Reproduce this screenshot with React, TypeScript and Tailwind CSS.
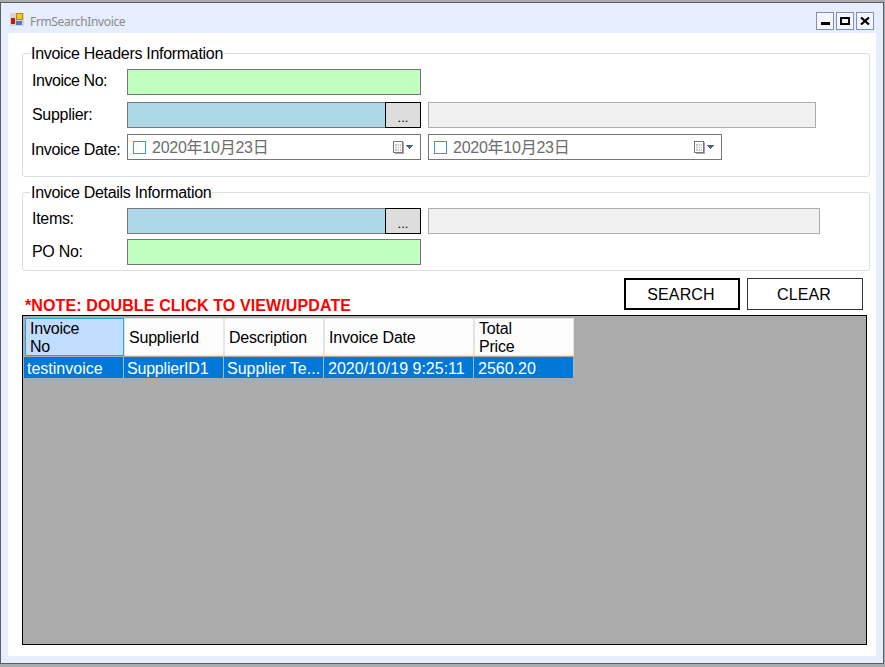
import React from "react";

const font = { fontFamily: '"Liberation Sans", "Noto Sans CJK SC", sans-serif' };

function Label({ text, className = "" }: { text: string; className?: string }) {
  return <div className={`w-[96px] text-[16px] leading-[26px] tracking-[-0.3px] text-black ${className}`}>{text}</div>;
}

function CalendarIcon() {
  return (
    <svg width="22" height="14" viewBox="0 0 22 14" className="mt-[1px] block" shapeRendering="crispEdges">
      <rect x="0.5" y="0.5" width="9" height="11" fill="#fff" stroke="#7d7570" />
      <path d="M10.5 1v11.5H2" fill="none" stroke="#a8a8a8" />
      <path d="M2 3h6v7H2z" fill="#c4c4c4" />
      <path d="M2 5h6M2 7h6M4 3v7M6 3v7" stroke="#f4f4f4" />
      <path d="M13 4h7v1h-1v1h-1v1h-1v1h-1V7h-1V6h-1V5h-1z" fill="#4d6185" />
    </svg>
  );
}

function DateBox({ widthClass }: { widthClass: string }) {
  return (
    <div className={`flex h-[26px] items-center border border-[#767676] bg-white pl-[5px] pr-[5px] ${widthClass}`}>
      <div className="h-[13px] w-[13px] shrink-0 border border-[#27a0dc]" />
      <div className="ml-[6px] mt-[1px] flex-1 text-[16px] leading-[24px] tracking-[-0.25px] text-[#6d6d6d]">2020年10月23日</div>
      <CalendarIcon />
    </div>
  );
}

function Picker() {
  return (
    <div className="flex h-[26px] w-[294px] border border-[#767676] bg-[#add8e6]">
      <div className="flex-1" />
      <div className="-mr-px -my-px flex w-[36px] items-end justify-center border border-black bg-[#dddddd] pb-[2px] text-[13px] leading-[14px] text-black">...</div>
    </div>
  );
}

function Green() {
  return <div className="h-[26px] w-[294px] border border-[#767676] bg-[#c0ffc0]" />;
}

function GroupTitle({ text }: { text: string }) {
  return <div className="absolute left-[7px] top-[-9px] bg-white px-px text-[16px] leading-[18px] tracking-[-0.3px] text-black">{text}</div>;
}

function HeaderCell({ lines, active = false, w }: { lines: string[]; active?: boolean; w: string }) {
  return (
    <div className={`flex h-[38px] flex-col justify-center border pl-[4px] pt-[1px] text-[16px] leading-[18px] tracking-[-0.2px] text-black ${w} ${active ? "border-[#27a0dc] bg-[#c0dcff]" : "border-[#e4e4e4] bg-[#fcfcfc]"}`}>
      {lines.map((l) => (
        <div key={l}>{l}</div>
      ))}
    </div>
  );
}

function RowCell({ text, w }: { text: string; w: string }) {
  return <div className={`h-[21px] overflow-hidden whitespace-nowrap border-r border-[#9fb7cf] pt-[1px] text-[16px] leading-[21px] text-white ${w}`}>{text}</div>;
}

export default function App() {
  return (
    <div className="h-[667px] w-[885px] overflow-hidden bg-[#ababab] pt-[2px]" style={font}>
      <div className="flex h-[662px] w-[884px] flex-col border border-[#5a5f66] bg-[#e6edfd]">
        <div className="flex h-[30px] shrink-0 items-start pl-[9px] pr-[8px] pt-[9px]">
          <svg width="14" height="14" viewBox="0 0 14 14" className="mt-[1px]" shapeRendering="crispEdges">
            <rect x="0" y="0" width="14" height="13" fill="#d8d4c8" />
            <rect x="6.5" y="0.5" width="6" height="6" fill="#f8c820" stroke="#b08810" />
            <rect x="1" y="5" width="4" height="6" fill="#c01818" />
            <rect x="6" y="8" width="6" height="4" fill="#4878d8" />
          </svg>
          <div className="ml-[6px] mt-[1px] text-[12px] leading-[18px] tracking-[-0.35px] text-[#8a8a8a]" style={{ fontFamily: '"Noto Sans", sans-serif' }}>FrmSearchInvoice</div>
          <div className="ml-auto flex gap-[2px] pr-[1px]">
            <div className="flex h-[18px] w-[18px] items-center justify-center border border-[#8291b3] bg-[#f3f6fe]"><div className="mt-[4px] h-[3px] w-[9px] bg-black" /></div>
            <div className="flex h-[18px] w-[18px] items-center justify-center border border-[#8291b3] bg-[#f3f6fe]"><div className="h-[8px] w-[10px] border-2 border-black" /></div>
            <div className="flex h-[18px] w-[18px] items-center justify-center border border-[#8291b3] bg-[#f3f6fe]">
              <svg width="10" height="8" viewBox="0 0 10 8"><path d="M1 0.5L9 7.5M9 0.5L1 7.5" stroke="#000" strokeWidth="2.2" /></svg>
            </div>
          </div>
        </div>
        <div className="mx-[7px] h-[623px] bg-white pl-[14px] pt-[20px]">
          <div className="relative h-[124px] w-[848px] rounded-[3px] border border-[#d5dfe5] pl-[8px] pt-[15px]">
            <GroupTitle text="Invoice Headers Information" />
            <div className="flex">
              <Label text="Invoice No:" className="pl-[1px] -mt-[1px] tracking-[-0.45px]" /><Green />
            </div>
            <div className="mt-[7px] flex">
              <Label text="Supplier:" className="pl-[1px]" /><Picker />
              <div className="ml-[7px] h-[26px] w-[388px] border border-[#adadad] bg-[#f0f0f0]" />
            </div>
            <div className="mt-[6px] flex">
              <Label text="Invoice Date:" className="pt-[3px]" /><DateBox widthClass="w-[294px]" />
              <div className="ml-[7px]"><DateBox widthClass="w-[294px]" /></div>
            </div>
          </div>
          <div className="relative mt-[15px] h-[79px] w-[848px] rounded-[3px] border border-[#d5dfe5] pl-[8px] pt-[15px]">
            <GroupTitle text="Invoice Details Information" />
            <div className="flex">
              <Label text="Items:" className="pl-[1px] -mt-[2px]" /><Picker />
              <div className="ml-[7px] h-[26px] w-[392px] border border-[#adadad] bg-[#f0f0f0]" />
            </div>
            <div className="mt-[5px] flex">
              <Label text="PO No:" className="pl-[1px]" /><Green />
            </div>
          </div>
          <div className="mt-[7px] flex h-[37px] w-[841px] items-start">
            <div className="ml-[3px] mt-[18px] text-[16px] font-bold leading-[19px] tracking-[0.12px] text-[#ff0000]">*NOTE: DOUBLE CLICK TO VIEW/UPDATE</div>
            <div className="ml-auto flex gap-[7px]">
              <div className="flex h-[32px] w-[116px] items-center justify-center border-2 border-black bg-white pr-[2px] pt-[1px] text-[16px] tracking-[0.15px] text-black">SEARCH</div>
              <div className="flex h-[32px] w-[116px] items-center justify-center border border-[#333333] bg-white pr-[2px] pt-[1px] text-[16px] tracking-[0.15px] text-black">CLEAR</div>
            </div>
          </div>
          <div className="h-[330px] w-[845px] border border-black bg-[#ababab] pl-[1px] pt-[2px]">
            <div className="flex">
              <HeaderCell lines={["Invoice", "No"]} active w="w-[99px] ml-px" />
              <HeaderCell lines={["SupplierId"]} w="w-[100px]" />
              <HeaderCell lines={["Description"]} w="w-[100px]" />
              <HeaderCell lines={["Invoice Date"]} w="w-[150px]" />
              <HeaderCell lines={["Total", "Price"]} w="w-[100px]" />
            </div>
            <div className="mt-[1px] flex w-[550px] bg-[#0078d7]">
              <RowCell text="testinvoice" w="w-[100px] pl-[3px]" />
              <RowCell text="SupplierID1" w="w-[100px] pl-[3px] tracking-[-0.2px]" />
              <RowCell text="Supplier Te..." w="w-[100px] pl-[3px]" />
              <RowCell text="2020/10/19 9:25:11" w="w-[150px] pl-[4px]" />
              <RowCell text="2560.20" w="w-[100px] pl-[4px]" />
            </div>
          </div>
        </div>
      </div>
    </div>
  );
}
